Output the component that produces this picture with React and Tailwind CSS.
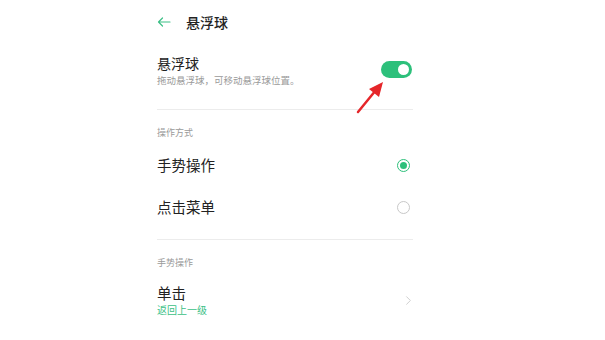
import { ChevronRight } from 'lucide-react'

const font = { fontFamily: '"Noto Sans CJK SC", "Noto Sans", sans-serif' }

function Radio({ on }) {
  return on ? (
    <div className="w-[13px] h-[13px] rounded-full border-[1.5px] border-[#2dc07b] flex items-center justify-center">
      <div className="w-[7px] h-[7px] rounded-full bg-[#2dc07b]" />
    </div>
  ) : (
    <div className="w-[13px] h-[13px] rounded-full border border-[#c8c8c8]" />
  )
}

export default function App() {
  return (
    <div className="relative w-[605px] h-[340px] overflow-hidden bg-white" style={font}>
      <div className="ml-[157px] w-[256px]">
        <div className="h-[44px] flex items-center gap-[15px]">
          <svg width="14" height="10" viewBox="0 0 14 10" fill="none" stroke="#3cbf86" strokeWidth="1.2" strokeLinecap="round" strokeLinejoin="round">
            <path d="M13 5H1.5M5.5 1L1.5 5l4 4" />
          </svg>
          <span className="text-[14px] font-medium text-[#222]">悬浮球</span>
        </div>

        <div className="h-[65px] pt-[9px] flex justify-between">
          <div>
            <div className="text-[14px] leading-[20px] text-[#222]">悬浮球</div>
            <div className="text-[9.5px] leading-[14px] text-[#9a9a9a]">拖动悬浮球，可移动悬浮球位置。</div>
          </div>
          <div className="mt-[8px] mr-[1px] w-[31px] h-[17px] rounded-full bg-[#2dc07b] flex items-center justify-end pr-[3px]">
            <div className="w-[11px] h-[11px] rounded-full bg-white" />
          </div>
        </div>
        <div className="h-px bg-[#ececec]" />

        <div className="pt-[16px] h-[30px] text-[9px] leading-[14px] text-[#9a9a9a]">操作方式</div>
        <div className="mt-[4px]">
          <div className="h-[42px] flex items-center justify-between pr-[3px]">
            <span className="text-[14.5px] text-[#222]">手势操作</span>
            <Radio on />
          </div>
          <div className="h-[42px] flex items-center justify-between pr-[3px]">
            <span className="text-[14.5px] text-[#222]">点击菜单</span>
            <Radio />
          </div>
        </div>
        <div className="mt-[11px] h-px bg-[#ececec]" />

        <div className="pt-[16px] h-[30px] text-[9px] leading-[14px] text-[#9a9a9a]">手势操作</div>
        <div className="mt-[13px] flex items-center justify-between">
          <div>
            <div className="text-[14.5px] leading-[20px] text-[#222]">单击</div>
            <div className="text-[10px] leading-[14px] text-[#3cbf86]">返回上一级</div>
          </div>
          <ChevronRight className="w-[15px] h-[15px] -mr-[3px] text-[#c4c4c4]" strokeWidth={1.3} />
        </div>
        <div className="mt-[21px] text-[14.5px] leading-[20px] text-[#222]">双击</div>
      </div>

      <svg className="absolute left-[352px] top-[78px]" width="36" height="40" viewBox="0 0 36 40">
        <path d="M6 34L24 12" stroke="#e5262a" strokeWidth="2.5" strokeLinecap="round" />
        <path d="M31 4L17 11L27 19Z" fill="#e5262a" />
      </svg>
    </div>
  )
}
